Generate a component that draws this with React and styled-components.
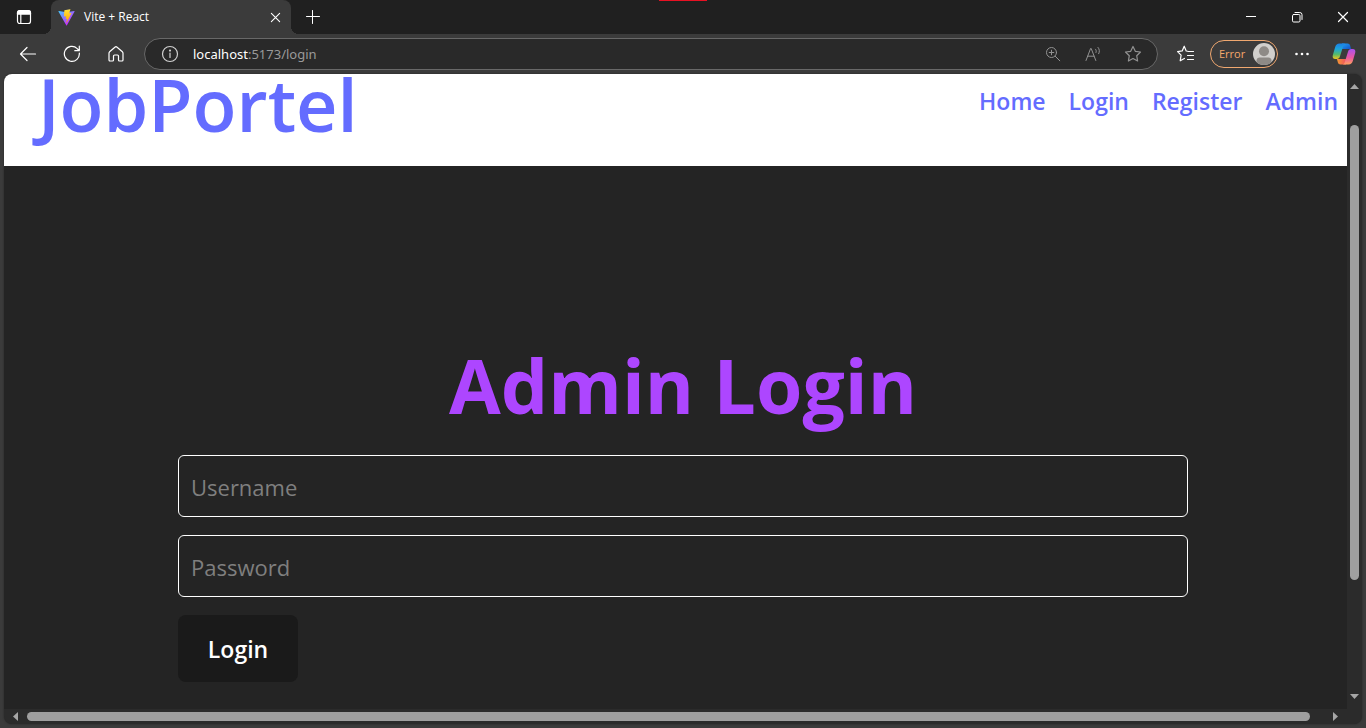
import React from "react";
import styled, { createGlobalStyle } from "styled-components";

const GlobalStyle = createGlobalStyle`
  * { box-sizing: border-box; }
  body { margin: 0; background: #3b3b3b; font-family: "Open Sans", "Noto Sans", sans-serif; }
  button { font-family: inherit; cursor: pointer; }
`;

const Browser = styled.div`
  display: flex;
  flex-direction: column;
  min-height: 100vh;
  background: #3b3b3b;
`;

const TitleBar = styled.div`
  position: relative;
  display: flex;
  align-items: stretch;
  height: 34px;
  background: #202020;
`;

const CaptureMark = styled.div`
  position: absolute;
  top: 0;
  left: 50%;
  margin-left: -24px;
  width: 48px;
  height: 1px;
  background: #e81123;
`;

const IconButton = styled.button`
  display: flex;
  align-items: center;
  justify-content: center;
  flex: none;
  width: ${(p) => p.$width || 44}px;
  padding: 0;
  border: 0;
  background: transparent;
  color: ${(p) => p.$color || "#ffffff"};
`;

const Tab = styled.div`
  position: relative;
  display: flex;
  align-items: center;
  width: 240px;
  margin-left: 3px;
  padding-left: 7px;
  border-radius: 8px 8px 0 0;
  background: #3b3b3b;
  color: #ffffff;

  &::before,
  &::after {
    content: "";
    position: absolute;
    bottom: 0;
    width: 8px;
    height: 8px;
  }
  &::before {
    right: 100%;
    background: radial-gradient(circle at 0 0, #202020 8px, #3b3b3b 8px);
  }
  &::after {
    left: 100%;
    background: radial-gradient(circle at 100% 0, #202020 8px, #3b3b3b 8px);
  }
`;

const TabTitle = styled.span`
  flex: 1;
  margin-left: 9px;
  font-size: 12px;
  line-height: 16px;
`;

const WindowButtons = styled.div`
  display: flex;
  margin-left: auto;
`;

const Toolbar = styled.div`
  display: flex;
  align-items: center;
  height: 40px;
  padding: 0 2px 0 6px;
`;

const AddressBar = styled.div`
  display: flex;
  align-items: center;
  flex: 1;
  height: 32px;
  margin: 0 6px;
  padding: 0 4px 0 13px;
  border: 1px solid #686868;
  border-radius: 16px;
  background: #292929;
`;

const Url = styled.div`
  flex: 1;
  margin-left: 11px;
  color: #9a9a9a;
  font-family: "Noto Sans", sans-serif;
  font-size: 13px;
  line-height: 20px;
  outline: none;
`;

const Host = styled.span`
  color: #ffffff;
`;

const ProfileButton = styled.button`
  display: flex;
  align-items: center;
  justify-content: space-between;
  width: 68px;
  height: 28px;
  margin: 0 2px;
  padding: 0 2px 1px 8px;
  border: 1px solid #f0a870;
  border-radius: 14px;
  background: transparent;
  color: #f5a86b;
  font-size: 11px;
`;

const Frame = styled.div`
  display: grid;
  grid-template-columns: minmax(0, 1fr) 15px;
  grid-template-rows: 1fr 15px;
  flex: 1;
  margin: 0 4px 4px;
  border-radius: 8px;
  overflow: hidden;
  background: #2b2b2b;
  box-shadow: 0 0 2px #222222;
`;

const Page = styled.div`
  background: #242424;
`;

const Header = styled.header`
  display: flex;
  align-items: flex-start;
  justify-content: space-between;
  height: 92px;
  padding: 0 9px 0 34px;
  background: #ffffff;
  color: #646cff;
`;

const Brand = styled.a`
  color: inherit;
  font-size: 72px;
  font-weight: 600;
  line-height: 60px;
  text-decoration: none;
`;

const Nav = styled.nav`
  display: flex;
  gap: 23px;
  padding-top: 9px;
`;

const NavLink = styled.a`
  color: inherit;
  font-size: 23px;
  font-weight: 600;
  line-height: 36px;
  text-decoration: none;
`;

const Main = styled.main`
  padding: 177px 159px 27px 174px;
`;

const Heading = styled.h1`
  margin: 0 0 28px;
  color: #ad46ff;
  font-size: 75px;
  font-weight: 700;
  line-height: 84px;
  text-align: center;
`;

const Form = styled.form`
  display: flex;
  flex-direction: column;
  align-items: flex-start;
  gap: 18px;
`;

const Field = styled.input`
  width: 100%;
  height: 62px;
  padding: 2px 12px 0;
  border: 1px solid #ffffff;
  border-radius: 6px;
  background: transparent;
  color: #ffffff;
  font-family: inherit;
  font-size: 22px;
  outline: none;

  &::placeholder {
    color: #7f7f7f;
    opacity: 1;
  }
`;

const SubmitButton = styled.button`
  height: 67px;
  width: 120px;
  padding: 0;
  border: 0;
  border-radius: 8px;
  background: #1a1a1a;
  color: #ffffff;
  font-size: 23px;
  font-weight: 600;
`;

const ScrollBar = styled.div`
  display: flex;
  flex-direction: ${(p) => (p.$horizontal ? "row" : "column")};
  align-items: center;
  justify-content: space-between;
  padding: ${(p) => (p.$horizontal ? "0 7px" : "8px 0")};
`;

const Track = styled.div`
  display: flex;
  flex: 1;
  flex-direction: ${(p) => (p.$horizontal ? "row" : "column")};
  padding: ${(p) => (p.$horizontal ? "0 2px" : "3px 0")};
`;

const Space = styled.div`
  flex: ${(p) => p.$share} 0 0;
`;

const Thumb = styled.div`
  flex: ${(p) => p.$share} 0 0;
  min-width: 9px;
  min-height: 9px;
  border-radius: 5px;
  background: #9f9f9f;
`;

const Line = ({ size = 18, view = 18, width = 1, children, ...rest }) => (
  <svg
    width={size}
    height={size}
    viewBox={`0 0 ${view} ${view}`}
    fill="none"
    stroke="currentColor"
    strokeWidth={width}
    strokeLinecap="round"
    strokeLinejoin="round"
    aria-hidden="true"
    {...rest}
  >
    {children}
  </svg>
);

const TabActionsIcon = () => (
  <Line size={16} view={16} width={1.2}>
    <rect x="1.5" y="1.5" width="13" height="13" rx="2.3" />
    <path d="M1.5 3.8a2.3 2.3 0 0 1 2.3-2.3h8.4a2.3 2.3 0 0 1 2.3 2.3v1.3h-13z" fill="currentColor" />
    <path d="M4.8 5v9.5" />
  </Line>
);

const ViteIcon = () => (
  <svg width="17" height="17" viewBox="0 0 410 404" aria-hidden="true">
    <defs>
      <linearGradient id="viteBody" x1="6" y1="33" x2="235" y2="344" gradientUnits="userSpaceOnUse">
        <stop stopColor="#41d1ff" />
        <stop offset="1" stopColor="#bd34fe" />
      </linearGradient>
      <linearGradient id="viteBolt" x1="195" y1="9" x2="236" y2="293" gradientUnits="userSpaceOnUse">
        <stop stopColor="#ffea83" />
        <stop offset="0.083" stopColor="#ffdd35" />
        <stop offset="1" stopColor="#ffa800" />
      </linearGradient>
    </defs>
    <path d="M399.641 59.525 215.643 388.545c-3.799 6.793-13.559 6.833-17.415.073L10.582 59.556C6.381 52.19 12.68 43.267 21.028 44.759l184.195 32.923c1.175.21 2.378.208 3.553-.006l180.343-32.87c8.32-1.517 14.649 7.337 10.522 14.719z" fill="url(#viteBody)" />
    <path d="M292.965 1.574 156.801 28.255a5 5 0 0 0-4.03 4.611l-8.376 141.464c-.197 3.332 2.863 5.918 6.115 5.168l37.91-8.749c3.547-.818 6.752 2.306 6.023 5.873l-11.263 55.153c-.758 3.712 2.727 6.886 6.352 5.785l23.415-7.114c3.63-1.102 7.118 2.081 6.35 5.796l-17.899 86.633c-1.12 5.419 6.088 8.374 9.094 3.728l2.008-3.103 110.954-221.428c1.858-3.707-1.346-7.935-5.418-7.15l-39.022 7.532c-3.667.707-6.787-2.708-5.752-6.296l25.469-88.291c1.036-3.594-2.095-7.012-5.766-6.293z" fill="url(#viteBolt)" />
  </svg>
);

const CloseIcon = ({ size = 12 }) => (
  <Line size={size} view={12} width={1.2}>
    <path d="M1.5 1.5l9 9M10.5 1.5l-9 9" />
  </Line>
);

const PlusIcon = () => (
  <Line size={14} view={14}>
    <path d="M6.5 0.5v13M0.5 6.5h13" />
  </Line>
);

const MinimizeIcon = () => (
  <Line size={12} view={12} shapeRendering="crispEdges">
    <path d="M1 5.5h10" />
  </Line>
);

const RestoreIcon = () => (
  <Line size={12} view={12}>
    <rect x="1.5" y="3.5" width="7.5" height="7.5" rx="1.2" />
    <path d="M4 1.5h4.8a2.2 2.2 0 0 1 2.2 2.2v4.8" />
  </Line>
);

const BackIcon = () => (
  <Line width={1.2}>
    <path d="M16.5 9H1.5M8 2.5 1.5 9 8 15.5" />
  </Line>
);

const RefreshIcon = () => (
  <Line width={1.2}>
    <path d="M16.3 8A7.5 7.5 0 1 1 14.2 3.6L16 5.5M16.3 1.2v4.5h-4.5" />
  </Line>
);

const HomeIcon = () => (
  <Line width={1.2}>
    <path d="M2 8.2c0-.6.2-1 .6-1.4l5.300-4.600a1.700 1.700 0 0 1 2.200 0l5.300 4.600c.4.4.6.8.6 1.400V15a1 1 0 0 1-1 1h-2.500a1 1 0 0 1-1-1v-4a1 1 0 0 0-1-1h-3a1 1 0 0 0-1 1v4a1 1 0 0 1-1 1H3a1 1 0 0 1-1-1z" />
  </Line>
);

const InfoIcon = () => (
  <Line size={24} view={24} width={1.2}>
    <circle cx="12" cy="12" r="7.5" />
    <path d="M12 11v4.5" />
    <circle cx="12" cy="8.6" r="0.5" fill="currentColor" />
  </Line>
);

const ZoomIcon = () => (
  <Line size={16} view={16}>
    <circle cx="6.5" cy="6.5" r="5" />
    <path d="M10.3 10.3l4.5 4.5M6.5 4.2v4.6M4.2 6.5h4.6" />
  </Line>
);

const ReadAloudIcon = () => (
  <Line>
    <path d="M2 15.5 6.6 3.5h.6l4.6 12M3.7 11.2H10" />
    <path d="M11.5 4.2c.8.9 1 2.1.5 3.3M14 2.4c1.6 1.8 1.8 4.2.7 6.3" />
  </Line>
);

const StarIcon = () => (
  <Line width={1.2}>
    <path d="M9 1.5l2.3 4.8 5.2.7-3.8 3.7.9 5.3L9 13.5 4.400 16l.9-5.300L1.500 7l5.200-.7z" />
  </Line>
);

const FavoritesIcon = () => (
  <Line width={1.2}>
    <path d="M16.500 6.500h-5L9.200 6 7.200 1.200 5.200 5.900.6 6.600l3.500 3.500-.9 5.700 4.200-2.400M10.500 10.500h6M10.500 14.500h6" />
  </Line>
);

const AvatarIcon = () => (
  <svg width="22" height="22" viewBox="0 0 22 22" aria-hidden="true">
    <defs>
      <clipPath id="avatarClip"><circle cx="11" cy="11" r="11" /></clipPath>
    </defs>
    <circle cx="11" cy="11" r="11" fill="#d1cfcc" />
    <g clipPath="url(#avatarClip)" fill="#8e8a86">
      <circle cx="11" cy="8.3" r="5" />
      <path d="M3.500 22v-4.500c0-2 1.400-3 3.200-3h8.600c1.800 0 3.200 1 3.200 3V22z" />
    </g>
  </svg>
);

const MoreIcon = () => (
  <svg width="16" height="4" viewBox="0 0 16 4" fill="currentColor" aria-hidden="true">
    <circle cx="2.5" cy="2" r="1.3" />
    <circle cx="8" cy="2" r="1.3" />
    <circle cx="13.5" cy="2" r="1.3" />
  </svg>
);

const CopilotIcon = () => (
  <svg width="24" height="22" viewBox="0 0 24 22" aria-hidden="true">
    <defs>
      <linearGradient id="copilotLeft" x1="0" y1="0" x2="0" y2="1">
        <stop stopColor="#1c7fe6" />
        <stop offset="0.35" stopColor="#1ca4dc" />
        <stop offset="0.7" stopColor="#55b96a" />
        <stop offset="1" stopColor="#f0c51d" />
      </linearGradient>
      <linearGradient id="copilotRight" x1="0" y1="0" x2="0" y2="1">
        <stop stopColor="#a951ee" />
        <stop offset="0.55" stopColor="#e957a2" />
        <stop offset="1" stopColor="#ffa05c" />
      </linearGradient>
      <linearGradient id="copilotTop" x1="0" y1="0" x2="1" y2="1">
        <stop stopColor="#20a0f0" />
        <stop offset="1" stopColor="#1450c8" />
      </linearGradient>
      <linearGradient id="copilotBottom" x1="0" y1="0" x2="1" y2="0">
        <stop stopColor="#f39b32" />
        <stop offset="1" stopColor="#f0525e" />
      </linearGradient>
    </defs>
    <path d="M10 0.5h5.500c1.500 0 2.200.8 2.600 2l1 3.500H10z" fill="url(#copilotTop)" />
    <path d="M14 21.500H8.500c-1.500 0-2.200-.8-2.600-2l-1-3.500H14z" fill="url(#copilotBottom)" />
    <path d="M7.500 0.500h6c-1.300.2-1.900 1.200-2.300 2.500L8 13.200c-.5 1.800-1.500 2.800-3.300 2.800H3.400C1.100 16 .2 14.400.8 12.300L3.200 4c.7-2.200 1.900-3.500 4.300-3.500z" fill="url(#copilotLeft)" />
    <path d="M16.500 21.500h-6c1.300-.2 1.900-1.200 2.300-2.500L16 8.800c.5-1.800 1.500-2.800 3.300-2.800h1.300c2.300 0 3.200 1.600 2.600 3.700L20.800 18c-.7 2.200-1.900 3.500-4.300 3.500z" fill="url(#copilotRight)" />
  </svg>
);

const arrows = {
  up: "M0 7 4.5 2 9 7z",
  down: "M0 2 4.5 7 9 2z",
  left: "M7 0 2 4.5 7 9z",
  right: "M2 0 7 4.5 2 9z",
};

const ScrollArrow = ({ direction }) => (
  <svg width="9" height="9" viewBox="0 0 9 9" fill="#a6a6a6" aria-hidden="true">
    <path d={arrows[direction]} />
  </svg>
);

const links = ["Home", "Login", "Register", "Admin"];

export default function App() {
  return (
    <Browser>
      <GlobalStyle />
      <TitleBar>
        <IconButton $width={48} aria-label="Tab actions"><TabActionsIcon /></IconButton>
        <Tab>
          <ViteIcon />
          <TabTitle>Vite + React</TabTitle>
          <IconButton $width={32} aria-label="Close tab"><CloseIcon size={11} /></IconButton>
        </Tab>
        <IconButton aria-label="New tab"><PlusIcon /></IconButton>
        <WindowButtons>
          <IconButton $width={46} aria-label="Minimize"><MinimizeIcon /></IconButton>
          <IconButton $width={46} aria-label="Restore"><RestoreIcon /></IconButton>
          <IconButton $width={46} aria-label="Close"><CloseIcon /></IconButton>
        </WindowButtons>
        <CaptureMark />
      </TitleBar>

      <Toolbar>
        <IconButton aria-label="Back"><BackIcon /></IconButton>
        <IconButton aria-label="Refresh"><RefreshIcon /></IconButton>
        <IconButton aria-label="Home page"><HomeIcon /></IconButton>
        <AddressBar>
          <IconButton $width={24} $color="#d0d0d0" aria-label="Site information"><InfoIcon /></IconButton>
          <Url role="textbox" aria-label="Address" contentEditable suppressContentEditableWarning spellCheck={false}>
            <Host>localhost</Host>:5173/login
          </Url>
          <IconButton $width={40} $color="#929292" aria-label="Zoom"><ZoomIcon /></IconButton>
          <IconButton $width={40} $color="#929292" aria-label="Read aloud"><ReadAloudIcon /></IconButton>
          <IconButton $width={40} $color="#929292" aria-label="Add to favorites"><StarIcon /></IconButton>
        </AddressBar>
        <IconButton aria-label="Favorites"><FavoritesIcon /></IconButton>
        <ProfileButton>Error<AvatarIcon /></ProfileButton>
        <IconButton aria-label="More"><MoreIcon /></IconButton>
        <IconButton $width={40} aria-label="Copilot"><CopilotIcon /></IconButton>
      </Toolbar>

      <Frame>
        <Page>
          <Header>
            <Brand href="#home">JobPortel</Brand>
            <Nav>
              {links.map((label) => (
                <NavLink key={label} href={`#${label.toLowerCase()}`}>{label}</NavLink>
              ))}
            </Nav>
          </Header>
          <Main>
            <Heading>Admin Login</Heading>
            <Form onSubmit={(e) => e.preventDefault()}>
              <Field type="text" placeholder="Username" aria-label="Username" />
              <Field type="password" placeholder="Password" aria-label="Password" />
              <SubmitButton type="submit">Login</SubmitButton>
            </Form>
          </Main>
        </Page>
        <ScrollBar>
          <ScrollArrow direction="up" />
          <Track>
            <Space $share={31} />
            <Thumb $share={456} />
            <Space $share={109} />
          </Track>
          <ScrollArrow direction="down" />
        </ScrollBar>
        <ScrollBar $horizontal>
          <ScrollArrow direction="left" />
          <Track $horizontal>
            <Space $share={5} />
            <Thumb $share={1283} />
            <Space $share={19} />
          </Track>
          <ScrollArrow direction="right" />
        </ScrollBar>
      </Frame>
    </Browser>
  );
}
